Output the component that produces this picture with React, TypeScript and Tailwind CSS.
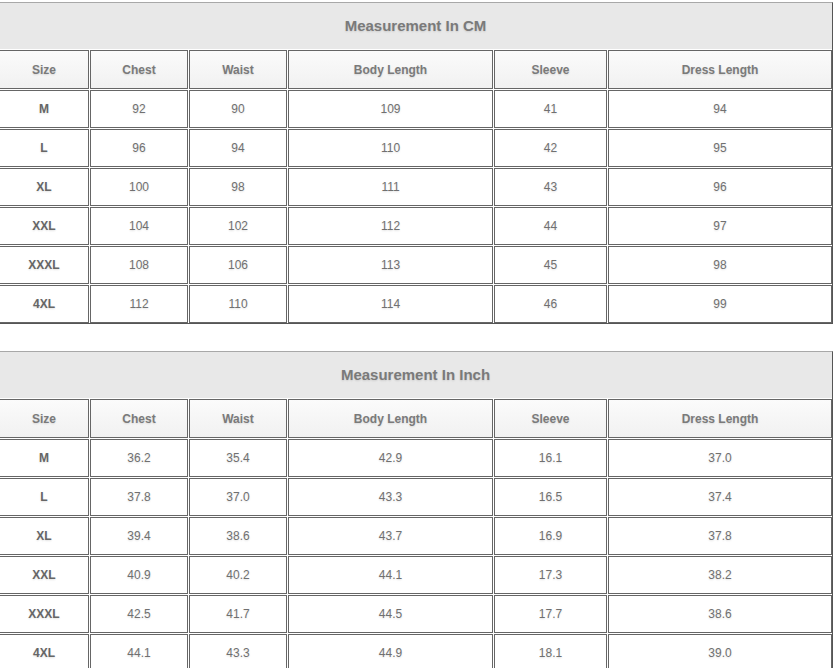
const headers = ["Size", "Chest", "Waist", "Body Length", "Sleeve", "Dress Length"];

const cmRows = [
  ["M", "92", "90", "109", "41", "94"],
  ["L", "96", "94", "110", "42", "95"],
  ["XL", "100", "98", "111", "43", "96"],
  ["XXL", "104", "102", "112", "44", "97"],
  ["XXXL", "108", "106", "113", "45", "98"],
  ["4XL", "112", "110", "114", "46", "99"],
];

const inchRows = [
  ["M", "36.2", "35.4", "42.9", "16.1", "37.0"],
  ["L", "37.8", "37.0", "43.3", "16.5", "37.4"],
  ["XL", "39.4", "38.6", "43.7", "16.9", "37.8"],
  ["XXL", "40.9", "40.2", "44.1", "17.3", "38.2"],
  ["XXXL", "42.5", "41.7", "44.5", "17.7", "38.6"],
  ["4XL", "44.1", "43.3", "44.9", "18.1", "39.0"],
];

const shadow = "[text-shadow:0_1px_2px_rgba(0,0,0,0.12)]";

function SizeTable({ title, rows }: { title: string; rows: string[][] }) {
  return (
    <div className="ml-[-2px] w-[835px] grid grid-cols-[90px_98px_98px_205px_113px_224px] gap-px bg-white border border-t-[#a8a8a8] border-l-[#a8a8a8] border-r-[#555] border-b-[#555]">
      {/* title row */}
      <div className={`col-span-6 h-[46px] bg-[#e8e8e8] flex items-center justify-center text-[15px] font-bold text-[#7a7a7a] ${shadow}`}>
        {title}
      </div>

      {/* header row */}
      {headers.map((h) => (
        <div
          key={h}
          className={`h-[39px] border border-[#666] bg-gradient-to-b from-[#fbfbfb] to-[#f1f1f1] flex items-center justify-center text-[12px] font-bold text-[#7a7a7a] ${shadow}`}
        >
          {h}
        </div>
      ))}

      {/* data rows */}
      {rows.map((r) =>
        r.map((v, i) => (
          <div
            key={r[0] + i}
            className={`h-[38px] border border-[#666] bg-white flex items-center justify-center text-[12px] ${i === 0 ? "font-bold text-[#666]" : "text-[#707070]"} ${shadow}`}
          >
            {v}
          </div>
        ))
      )}
    </div>
  );
}

export default function App() {
  return (
    <div className="w-[834px] h-[668px] overflow-hidden bg-white pt-[2px] font-['Liberation_Sans',Arial,sans-serif]">
      <SizeTable title="Measurement In CM" rows={cmRows} />
      <div className="h-[27px]" />
      <SizeTable title="Measurement In Inch" rows={inchRows} />
    </div>
  );
}
